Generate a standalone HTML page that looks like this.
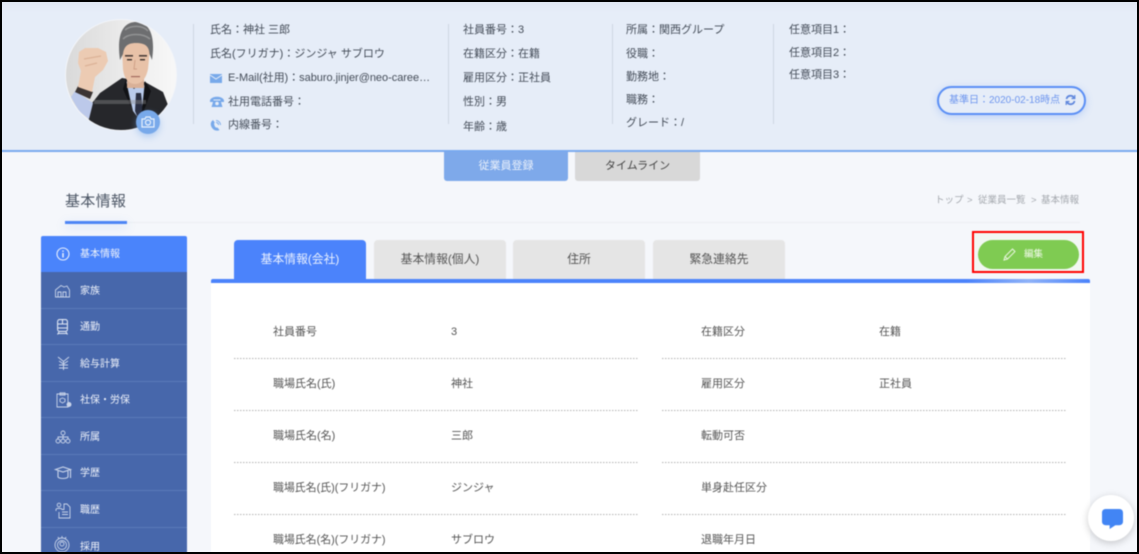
<!DOCTYPE html>
<html lang="ja"><head><meta charset="utf-8">
<style>
html,body{margin:0;padding:0;background:#f5f7fb;}
#w{position:relative;width:1139px;height:554px;overflow:hidden;background:#f5f7fb;font-family:"Liberation Sans","Noto Sans CJK JP",sans-serif;color:#444c58;}
#c{position:absolute;left:0;top:0;width:1139px;height:554px;filter:blur(.4px);}
.t{position:absolute;white-space:nowrap;font-size:11px;line-height:16px;}
.a{position:absolute;}
.side{position:absolute;left:41px;width:146px;background:#4767ab;border-bottom:1px solid #5a7ab9;box-sizing:border-box;}
.s{position:absolute;left:80px;color:#eef2fa;font-size:10px;line-height:14px;white-space:nowrap;}
.tab{position:absolute;top:240px;width:132px;height:39px;background:#e5e5e5;border-radius:4px 4px 0 0;text-align:center;line-height:38px;font-size:11.800px;color:#555;}
.d{position:absolute;height:1px;width:404px;background:repeating-linear-gradient(90deg,#b4b4b4 0,#b4b4b4 1.500px,transparent 1.500px,transparent 3px);}
.l{position:absolute;font-size:11px;line-height:14px;color:#555;white-space:nowrap;}
svg{position:absolute;overflow:visible;}
</style></head><body><div id="w"><div id="c">

<div class="a" style="left:0;top:0;width:1139px;height:150px;background:linear-gradient(#dfe6f1 0,#e6edf8 12px,#e6edf8 100%);"></div>
<div class="a" style="left:0;top:150px;width:1139px;height:2px;background:#7aa9ee;"></div>

<!-- avatar -->
<svg style="left:65px;top:19px" width="112" height="112" viewBox="0 0 112 112">
<defs><clipPath id="cp"><circle cx="56" cy="56" r="55"/></clipPath>
<linearGradient id="bg" x1="0" x2="1"><stop offset="0" stop-color="#d9d9d9"/><stop offset=".55" stop-color="#ececec"/><stop offset="1" stop-color="#f8f8f8"/></linearGradient></defs>
<circle cx="56" cy="56" r="56" fill="#f3f5f9"/>
<g clip-path="url(#cp)">
<rect width="112" height="112" fill="url(#bg)"/>
<!-- suit -->
<path d="M20 93 L35 74 L57 59 L80 63 L98 73 L103 86 L104 112 L30 112 Z" fill="#26272b"/>
<!-- shirt -->
<path d="M61 62 L69 70 L78 62 L82 76 L74 100 L68 92 Z" fill="#b9cbec"/>
<path d="M71 74 L76 74 L78 92 L74 102 L70 92 Z" fill="#2a2f42"/>
<path d="M61 60 L66 88 L58 70 Z" fill="#111215"/>
<path d="M80 62 L86 72 L76 100 Z" fill="#111215"/>
<!-- sleeve and arm -->
<path d="M6 78 L10 72 L28 84 L24 100 L14 92 Z" fill="#bcc9ea"/>
<path d="M10 73 L13 67 L28 73 L25 80 Z" fill="#3b3433"/>
<!-- hand -->
<path d="M13 68 L16 52 L13 44 L14 33 L20 29 L33 29 L41 33 L43 42 L38 51 L30 58 L27 73 Z" fill="#eccbb3"/>
<path d="M19 40 L36 37 M20 47 L32 44" stroke="#dcb297" stroke-width="1.200" fill="none"/>
<!-- neck & face -->
<rect x="62" y="56" width="17" height="13" fill="#d9b097"/>
<path d="M57 30 C57 18 84 18 85 30 L83 50 C81 60 76 65 70 65 C64 65 59 60 58 50 Z" fill="#e8c2a8"/>
<path d="M55 41 C51 12 60 3 71 3 C83 3 91 14 87 41 L84.500 35 C84 27 80 24 71 24 C63 24 59 27 58 35 Z" fill="#6d6e70"/>
<path d="M60 11 C66 6 78 6 83 12 M58 20 C64 14 78 14 85 20" stroke="#929394" stroke-width="1.500" fill="none"/>
<rect x="60" y="36" width="8" height="1.600" fill="#4a3d38"/><rect x="74" y="36" width="8" height="1.600" fill="#4a3d38"/>
<rect x="62" y="40" width="5" height="1.400" fill="#3a302c"/><rect x="75" y="40" width="5" height="1.400" fill="#3a302c"/>
<path d="M70 41 L69 50 L72 50" stroke="#cf9f86" stroke-width="1" fill="none"/>
<rect x="66" y="57" width="9" height="1.200" fill="#a36a5e"/>
<!-- watermark -->
<rect x="29" y="81" width="52" height="4" fill="#8e8f92" opacity=".4"/>
</g></svg>
<div class="a" style="left:136px;top:110px;width:24px;height:24px;border-radius:50%;background:#78a9ea;box-shadow:0 3px 7px rgba(120,169,234,.45);"></div>
<svg style="left:141px;top:116px" width="14" height="12" viewBox="0 0 14 12" fill="none" stroke="#e8f1fd" stroke-width="1.200"><path d="M1 3h3l1-2h4l1 2h3v8H1z"/><circle cx="7" cy="6.500" r="2.500"/></svg>

<!-- dividers -->
<div class="a" style="left:193px;top:24px;width:1px;height:100px;background:#ced6e2;"></div>
<div class="a" style="left:448px;top:24px;width:1px;height:100px;background:#ced6e2;"></div>
<div class="a" style="left:612px;top:24px;width:1px;height:100px;background:#ced6e2;"></div>
<div class="a" style="left:773px;top:24px;width:1px;height:100px;background:#ced6e2;"></div>

<!-- column 1 -->
<div class="t" style="left:210px;top:22px;">氏名：神社 三郎</div>
<div class="t" style="left:210px;top:46px;">氏名(フリガナ)：ジンジャ サブロウ</div>
<div class="t" style="left:228px;top:70px;letter-spacing:-.03px;">E-Mail(社用)：saburo.jinjer@neo-caree…</div>
<div class="t" style="left:228px;top:94px;">社用電話番号：</div>
<div class="t" style="left:228px;top:117px;">内線番号：</div>
<svg style="left:210px;top:74px" width="12" height="9" viewBox="0 0 12 9"><rect width="12" height="9" fill="#78a9ea"/><path d="M0 1l6 4 6-4" fill="none" stroke="#e6edf8" stroke-width="1"/></svg>
<svg style="left:210px;top:96px" width="14" height="11" viewBox="0 0 14 11"><path d="M0 4.500C1 -.5 13 -.5 14 4.500V6H10.500V3.500H3.500V6H0Z" fill="#78a9ea"/><path d="M1.500 11L3.500 4.500H10.500L12.500 11Z" fill="#78a9ea"/><circle cx="7" cy="7.500" r="1.800" fill="#e6edf8"/></svg>
<svg style="left:210px;top:119px" width="12" height="12" viewBox="0 0 12 12" fill="none"><path d="M3 1C0 3 0 7 3 10 5 12 8 12 9.500 11L7.500 8.500C6 9 5 8 4.500 6.500 4 5 4 4 4.800 3.500Z" fill="#78a9ea"/><path d="M6 1.500C8.500 1.500 10.500 3.500 10.500 6M6 3.500C7.500 3.500 8.500 4.500 8.500 6" stroke="#78a9ea" stroke-width="1"/></svg>

<!-- column 2 -->
<div class="t" style="left:463px;top:22px;">社員番号：3</div>
<div class="t" style="left:463px;top:46px;">在籍区分：在籍</div>
<div class="t" style="left:463px;top:70px;">雇用区分：正社員</div>
<div class="t" style="left:463px;top:94px;">性別：男</div>
<div class="t" style="left:463px;top:119px;">年齢：歳</div>

<!-- column 3 -->
<div class="t" style="left:626px;top:22px;">所属：関西グループ</div>
<div class="t" style="left:626px;top:46px;">役職：</div>
<div class="t" style="left:626px;top:69px;">勤務地：</div>
<div class="t" style="left:626px;top:92px;">職務：</div>
<div class="t" style="left:626px;top:115px;">グレード：/</div>

<!-- column 4 -->
<div class="t" style="left:789px;top:22px;">任意項目1：</div>
<div class="t" style="left:789px;top:45px;">任意項目2：</div>
<div class="t" style="left:789px;top:67px;">任意項目3：</div>

<!-- date pill -->
<div class="a" style="left:937px;top:86px;width:149px;height:29px;box-sizing:border-box;border:2px solid #5b8ff5;border-radius:15px;background:#e6edf8;box-shadow:0 2px 8px rgba(91,143,245,.3);"></div>
<div class="t" style="left:949px;top:93px;font-size:10px;line-height:15px;color:#6e96ee;">基準日：2020-02-18時点</div>
<svg style="left:1065px;top:94px" width="11" height="12" viewBox="0 0 11 12" fill="none" stroke="#5e86dc" stroke-width="1.800"><path d="M1.500 5A4 4 0 0 1 9 4M9.500 7A4 4 0 0 1 2 8"/><path d="M9.800 1v3.500H6.500M1.200 11V7.500H4.500" stroke-width="1.200"/></svg>

<!-- top buttons -->
<div class="a" style="left:444px;top:152px;width:124px;height:29px;background:#7ea9ea;border-radius:0 0 3px 3px;color:#e9f0fb;text-align:center;font-size:11px;line-height:29px;">従業員登録</div>
<div class="a" style="left:575px;top:152px;width:125px;height:29px;background:#d8d8d8;border-radius:0 0 3px 3px;color:#444;text-align:center;font-size:11px;line-height:29px;">タイムライン</div>

<!-- title -->
<div class="t" style="left:65px;top:192px;font-size:15px;line-height:20px;color:#4d5766;letter-spacing:.3px;">基本情報</div>
<div class="a" style="left:127px;top:222px;width:953px;height:1px;background:#eceef3;"></div>
<div class="a" style="left:65px;top:221px;width:62px;height:3px;background:#4d85f5;box-shadow:0 3px 10px rgba(77,133,245,.25);"></div>
<div class="t" style="left:935px;top:194px;font-size:9.500px;line-height:14px;color:#a4a8ae;">トップ</div>
<div class="t" style="left:967px;top:194px;font-size:9.500px;line-height:14px;color:#a4a8ae;">&gt;</div>
<div class="t" style="left:978px;top:194px;font-size:9.500px;line-height:14px;color:#a4a8ae;">従業員一覧</div>
<div class="t" style="left:1031px;top:194px;font-size:9.500px;line-height:14px;color:#a4a8ae;">&gt;</div>
<div class="t" style="left:1041px;top:194px;font-size:9.500px;line-height:14px;color:#a4a8ae;">基本情報</div>

<!-- sidebar -->
<div class="a" style="left:41px;top:236px;width:146px;height:36px;background:#4a84fb;border-radius:2px 2px 0 0;"></div>
<div class="side" style="top:272px;height:37px;"></div>
<div class="side" style="top:309px;height:36px;"></div>
<div class="side" style="top:345px;height:37px;"></div>
<div class="side" style="top:382px;height:36px;"></div>
<div class="side" style="top:418px;height:37px;"></div>
<div class="side" style="top:455px;height:36px;"></div>
<div class="side" style="top:491px;height:37px;"></div>
<div class="side" style="top:528px;height:26px;border:0;"></div>
<div class="s" style="top:248px;">基本情報</div>
<div class="s" style="top:285px;">家族</div>
<div class="s" style="top:321px;">通勤</div>
<div class="s" style="top:358px;">給与計算</div>
<div class="s" style="top:394px;">社保・労保</div>
<div class="s" style="top:431px;">所属</div>
<div class="s" style="top:467px;">学歴</div>
<div class="s" style="top:504px;">職歴</div>
<div class="s" style="top:541px;">採用</div>

<svg style="left:56px;top:247px" width="14" height="14" viewBox="0 0 14 14" fill="none" stroke="#e9f0fd" stroke-width="1.100"><circle cx="7" cy="7" r="6"/><path d="M7 6v4.500M7 3.500v1.300" stroke-width="1.500"/></svg>
<svg style="left:55px;top:284px" width="15" height="14" viewBox="0 0 15 14" fill="none" stroke="#c9d4ea" stroke-width=".9"><path d="M.5 13V6L6 1.500 9 3l3-1 2.500 4v7zM3 13V8h3v5M8 13V8h3v5"/></svg>
<svg style="left:57px;top:319px" width="11" height="16" viewBox="0 0 11 16" fill="none" stroke="#dfe6f4" stroke-width="1.100"><rect x=".6" y=".6" width="9.800" height="11.800" rx="2"/><path d="M.6 5h9.800M.6 9h9.800M5.500 .6V5M2 13l-1.500 2.500M9 13l1.500 2.500M1 14.500h9"/></svg>
<svg style="left:57px;top:356px" width="13" height="15" viewBox="0 0 13 15" fill="none" stroke="#c9d4ea" stroke-width="1"><path d="M1 1l5.500 4.500L12 1M2 5l4.500 3L11 5M2 9h9M2 12h9M6.500 5v9"/></svg>
<svg style="left:56px;top:392px" width="16" height="16" viewBox="0 0 16 16" fill="none" stroke="#c9d4ea" stroke-width=".9"><path d="M1 2h11v13H1zM4 .8h5v2.400H4z"/><path d="M6.500 6l2.500 1v2.500L6.500 11 4 9.500V7z"/><circle cx="13" cy="12.500" r="2" fill="#c9d4ea"/></svg>
<svg style="left:55px;top:430px" width="16" height="14" viewBox="0 0 16 14" fill="none" stroke="#c9d4ea" stroke-width=".9"><circle cx="8" cy="3" r="2"/><circle cx="3" cy="11" r="2"/><circle cx="8" cy="11" r="2"/><circle cx="13" cy="11" r="2"/><path d="M8 5v4M3 9V7h10v2"/></svg>
<svg style="left:55px;top:466px" width="16" height="15" viewBox="0 0 16 15" fill="none" stroke="#c9d4ea" stroke-width="1.100"><path d="M.5 3.500L8 1l7.500 2.500L8 6z"/><path d="M3 5v6c2 2 8 2 10 0V5"/><path d="M15.500 4v8"/></svg>
<svg style="left:55px;top:502px" width="16" height="17" viewBox="0 0 16 17" fill="none" stroke="#c9d4ea" stroke-width=".9"><circle cx="4" cy="3" r="1.800"/><path d="M1 9V7.500C1 6 7 6 7 7.500H9V2h3l3 3v11H4v-6M7 10h6M7 12.500h6"/></svg>
<svg style="left:54px;top:535px" width="16" height="19" viewBox="0 0 16 19" fill="none" stroke="#c9d4ea" stroke-width=".9"><circle cx="8" cy="10" r="7"/><circle cx="8" cy="10" r="4.500"/><circle cx="8" cy="9" r="2"/><path d="M4 2l1 2M12 2l-1 2M8 1v2"/></svg>

<!-- tabs -->
<div class="tab" style="left:234px;background:#4b83fb;color:#eaf1ff;">基本情報(会社)</div>
<div class="tab" style="left:374px;">基本情報(個人)</div>
<div class="tab" style="left:513px;">住所</div>
<div class="tab" style="left:653px;">緊急連絡先</div>

<!-- edit -->
<div class="a" style="left:972px;top:231px;width:112px;height:42px;box-sizing:border-box;border:2px solid #f00;background:#f2f7f3;"></div>
<div class="a" style="left:978px;top:240px;width:101px;height:29px;border-radius:15px;background:#7fcb52;"></div>
<svg style="left:1003px;top:248px" width="13" height="13" viewBox="0 0 13 13" fill="none" stroke="#e9f6df" stroke-width="1"><path d="M1 12l1-3.500L9.500 1l2.500 2.500L4.500 11z"/><path d="M2 8.500L4.500 11"/></svg>
<div class="t" style="left:1024px;top:248px;font-size:9.500px;line-height:14px;color:#f1faea;">編集</div>

<!-- panel -->
<div class="a" style="left:211px;top:282px;width:879px;height:272px;background:#fff;"></div>
<div class="a" style="left:211px;top:279px;width:879px;height:4px;background:linear-gradient(90deg,#4b83fb 0,#4b83fb 86%,#8fb2f8 93%,#4b83fb 100%);border-radius:2px 2px 0 0;"></div>

<div class="l" style="left:273px;top:325px;">社員番号</div><div class="l" style="left:451px;top:325px;">3</div>
<div class="l" style="left:701px;top:325px;">在籍区分</div><div class="l" style="left:879px;top:325px;">在籍</div>
<div class="d" style="left:234px;top:358px;"></div><div class="d" style="left:662px;top:358px;"></div>
<div class="l" style="left:273px;top:377px;">職場氏名(氏)</div><div class="l" style="left:451px;top:377px;">神社</div>
<div class="l" style="left:701px;top:377px;">雇用区分</div><div class="l" style="left:879px;top:377px;">正社員</div>
<div class="d" style="left:234px;top:410px;"></div><div class="d" style="left:662px;top:410px;"></div>
<div class="l" style="left:273px;top:429px;">職場氏名(名)</div><div class="l" style="left:451px;top:429px;">三郎</div>
<div class="l" style="left:701px;top:429px;">転動可否</div>
<div class="d" style="left:234px;top:462px;"></div><div class="d" style="left:662px;top:462px;"></div>
<div class="l" style="left:273px;top:481px;font-size:10.900px;">職場氏名(氏)(フリガナ)</div><div class="l" style="left:451px;top:481px;">ジンジャ</div>
<div class="l" style="left:701px;top:481px;">単身赴任区分</div>
<div class="d" style="left:234px;top:514px;"></div><div class="d" style="left:662px;top:514px;"></div>
<div class="l" style="left:273px;top:533px;font-size:10.900px;">職場氏名(名)(フリガナ)</div><div class="l" style="left:451px;top:533px;">サブロウ</div>
<div class="l" style="left:701px;top:533px;">退職年月日</div>

<!-- chat -->
<div class="a" style="left:1088px;top:495px;width:46px;height:46px;border-radius:50%;background:#fff;box-shadow:0 2px 8px rgba(0,0,0,.2);"></div>
<svg style="left:1102px;top:509px" width="21" height="21" viewBox="0 0 22 22"><path d="M4 0H18C20.500 0 22 1.500 22 4V13C22 15.500 20.500 17 18 17H14L8 21V17H4C1.500 17 0 15.500 0 13V4C0 1.500 1.500 0 4 0Z" fill="#4285f4"/></svg>
</div>

<!-- screenshot frame -->
<div class="a" style="left:0;top:0;width:1139px;height:2px;background:#000;"></div>
<div class="a" style="left:0;top:552px;width:1139px;height:2px;background:#000;"></div>
<div class="a" style="left:0;top:0;width:2px;height:554px;background:#000;"></div>
<div class="a" style="left:1137px;top:0;width:2px;height:554px;background:#000;"></div>
</div></body></html>
